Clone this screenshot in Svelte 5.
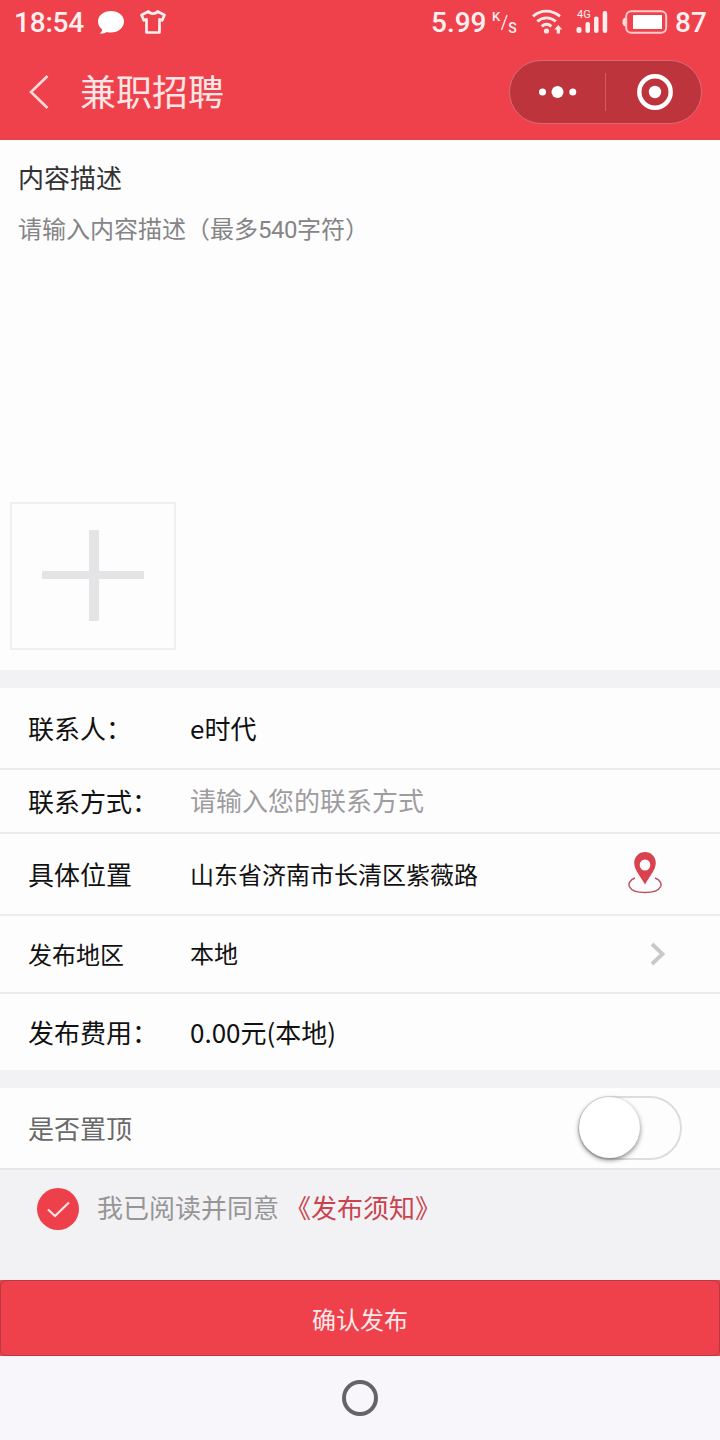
<script>
  let contact = $state('e时代');
  let pinned = $state(false);
</script>

<div class="phone">
  <header>
    <div class="status">
      <span class="time">18:54</span>
      <svg class="bubble" width="28" height="26" viewBox="0 0 28 26">
        <path d="M14 1C6.8 1 1 5.600 1 11.500c0 3.300 1.600 6 4.200 8-.2 1.800-1.200 3-2.700 4 2.900.3 5.400-.4 7.300-1.500 1.300.4 2.700.5 4.200.5 7.200 0 13-4.900 13-11S21.200 1 14 1z" fill="#fff" />
      </svg>
      <svg class="shirt" width="28" height="26" viewBox="0 0 28 26">
        <path d="M9.500 2.500 2.500 6l2.300 5.300 2.700-1V23.500h13V10.300l2.700 1L25.500 6l-7-3.500c-1.600 2.800-7.400 2.800-9 0z" fill="none" stroke="#fff0f0" stroke-width="2.700" stroke-linejoin="round" />
      </svg>
      <span class="rate">5.99</span>
      <span class="unit"><i>K</i><svg width="10" height="20" viewBox="0 0 10 20"><path d="M8 2 2.500 17" stroke="#ffdede" stroke-width="1.500" /></svg><i class="sec">S</i></span>
      <svg class="wifi" width="32" height="28" viewBox="0 0 32 28">
        <g fill="none" stroke="#ffeaea" stroke-width="2.900">
          <path d="M2 8.300c8-6.900 18.500-6.900 27 0" />
          <path d="M6.300 13.400c5.600-4.700 12.800-4.700 18.500 0" />
          <path d="M10.700 18.300c3-2.500 6.700-2.500 9.700 0" />
        </g>
        <circle cx="15.500" cy="23" r="2.600" fill="#ffeaea" />
        <path d="m27.300 17 4 4.400h-2.400v4.200h-3.200v-4.200h-2.400z" fill="#ffeaea" />
      </svg>
      <span class="signal">
        <b>4G</b>
        <svg width="32" height="26" viewBox="0 0 32 26" fill="#ffeeee">
          <rect x="0.500" y="18" width="5" height="6" rx="2" />
          <rect x="9.500" y="13" width="4.500" height="11" rx="2" />
          <rect x="18" y="7.500" width="4.500" height="16.500" rx="2" />
          <rect x="26.700" y="2" width="4.500" height="22" rx="2" />
        </svg>
      </span>
      <svg class="battery" width="46" height="24" viewBox="0 0 46 24">
        <rect x="4.200" y="1.200" width="40" height="21.600" rx="5" fill="none" stroke="#ffcaca" stroke-width="2" />
        <path d="M3.500 7.500v9C1.200 16 .5 14.500.5 12s.7-4 3-4.500z" fill="#ffe3e3" />
        <rect x="11" y="5" width="29" height="14" fill="#fff" />
      </svg>
      <span class="percent">87</span>
    </div>
    <div class="title">
      <svg class="back" width="20" height="36" viewBox="0 0 20 36">
        <path d="M18.500 2 2 18l16.500 16" fill="none" stroke="#ffdada" stroke-width="2.600" />
      </svg>
      <h1>兼职招聘</h1>
      <div class="capsule">
        <div class="half">
          <svg width="40" height="14" viewBox="0 0 40 14" fill="#fff">
            <circle cx="4.500" cy="7" r="3.500" /><circle cx="19.500" cy="7" r="6" /><circle cx="34.800" cy="7" r="3.500" />
          </svg>
        </div>
        <div class="half right">
          <svg width="36" height="36" viewBox="0 0 36 36">
            <circle cx="18" cy="18" r="15.700" fill="none" stroke="#fff" stroke-width="4.400" />
            <circle cx="18" cy="18" r="6.200" fill="#fff" />
          </svg>
        </div>
      </div>
    </div>
  </header>

  <section class="describe">
    <h2>内容描述</h2>
    <p>请输入内容描述（最多<span class="num">540</span>字符）</p>
    <div class="upload">
      <svg width="104" height="92" viewBox="0 0 104 92" fill="#e4e3e5">
        <rect x="48" y="0" width="10" height="91" /><rect x="1" y="41" width="102" height="8" />
      </svg>
    </div>
  </section>

  <section class="form">
    <div class="row contact"><span class="label">联系人：</span><span>{contact}</span></div>
    <div class="row way"><span class="label">联系方式：</span><span class="hint">请输入您的联系方式</span></div>
    <div class="row place">
      <span class="label">具体位置</span><span class="small">山东省济南市长清区紫薇路</span>
      <svg class="pin" width="34" height="44" viewBox="0 0 34 44">
        <path d="M7 27C-3 31-1 41.500 17 41.500S37 31 27 27" fill="none" stroke="#bd5360" stroke-width="1.500" />
        <path fill-rule="evenodd" d="M17 1C11 1 6.200 5.800 6.200 12c0 7.600 8 15.500 10.800 21.500C19.800 27.500 27.800 19.600 27.800 12 27.800 5.800 23 1 17 1zm0 7.500a5.300 5.500 0 1 1 0 11 5.300 5.500 0 0 1 0-11z" fill="#d9434f" />
      </svg>
    </div>
    <div class="row area">
      <span class="label small">发布地区</span><span class="small">本地</span>
      <svg class="arrow" width="16" height="24" viewBox="0 0 16 24">
        <path d="m2 2 10.500 10L2 22" fill="none" stroke="#c8c7c9" stroke-width="3.800" />
      </svg>
    </div>
    <div class="row fee"><span class="label">发布费用：</span><span>0.00元(本地)</span></div>
  </section>

  <section class="top">
    <span>是否置顶</span>
    <button class="switch" class:on={pinned} aria-label="是否置顶" onclick={() => (pinned = !pinned)}><i></i></button>
  </section>

  <section class="agree">
    <svg width="42" height="42" viewBox="0 0 42 42">
      <circle cx="21" cy="21" r="21" fill="#ee404b" />
      <path d="m11 21.500 7 6.500 14-13.500" fill="none" stroke="#ffe4e4" stroke-width="2.200" />
    </svg>
    <span>我已阅读并同意</span>
    <a href="#notice">《发布须知》</a>
  </section>

  <div class="bar"><button class="submit">确认发布</button></div>
  <nav><i></i></nav>
</div>

<style>
  :global(body) { margin: 0; }
  .phone {
    width: 720px; height: 1440px; display: flex; flex-direction: column; overflow: hidden;
    background: #f2f1f3; color: #111;
    font: 26px/36px "Noto Sans CJK SC", sans-serif;
  }
  .phone * { box-sizing: border-box; }
  svg { display: block; flex: none; }
  i { font-style: normal; }
  header { height: 140px; background: #ef414b; color: #fff; }
  .status {
    height: 44px; display: flex; align-items: center; padding-left: 14px;
    font-family: Roboto, sans-serif; font-size: 28px; font-weight: 500; white-space: nowrap;
  }
  .status > span { color: #fff0f0; }
  .time { width: 83px; padding-top: 2px; letter-spacing: -0.2px; }
  .bubble { margin-top: 1px; }
  .shirt { margin-left: 14px; }
  .rate { margin-left: 264px; width: 61px; padding-top: 2px; }
  .unit { display: flex; width: 24px; height: 24px; font-size: 13px; line-height: 14px; }
  .unit svg { margin: 3px -1px 0; }
  .unit .sec { margin-top: 11px; font-size: 14px; }
  .wifi { margin-left: 15px; }
  .signal { display: grid; width: 32px; height: 26px; margin-left: 13px; }
  .signal b, .signal svg { grid-area: 1 / 1; }
  .signal b { font-size: 11px; line-height: 11px; font-weight: 400; padding-left: 1px; }
  .battery { margin-left: 14px; }
  .percent { margin-left: 7px; padding-top: 2px; }
  .title { height: 96px; display: flex; align-items: center; padding: 0 18px 0 29px; }
  h1 { margin: -5px 0 0 31px; font-size: 36px; line-height: 48px; font-weight: 400; color: #ffe6e6; }
  .capsule {
    margin-left: auto; width: 193px; height: 64px; display: flex; align-items: center;
    border: 1px solid #da6a72; border-radius: 32px; background: #bd343d;
  }
  .half { width: 96px; height: 38px; display: flex; align-items: center; justify-content: center; }
  .right { border-left: 1px solid #d35a62; padding-left: 2px; }
  .describe { height: 530px; background: #fefdfe; padding: 19px 10px 0; }
  h2 { margin: 0; padding-left: 8px; font-size: 26px; line-height: 36px; font-weight: 400; color: #333; }
  p { margin: 15px 0 0; padding-left: 8px; font-size: 24px; line-height: 36px; color: #858486; }
  .num { font-family: Roboto, sans-serif; letter-spacing: -0.5px; }
  .upload {
    width: 166px; height: 148px; margin-top: 254px; border: 2px solid #efeef0;
    display: flex; align-items: center; justify-content: center;
  }
  .form { margin-top: 18px; background: #fefdfe; }
  .row {
    display: flex; align-items: center; padding: 0 54px 0 28px;
    border-bottom: 2px solid #ecebed; color: #111;
  }
  .label { width: 162px; flex: none; white-space: nowrap; }
  .small { font-size: 24px; }
  .hint { color: #9d9c9e; margin-top: -3px; }
  .contact { height: 82px; padding-bottom: 1px; }
  .way { height: 64px; }
  .place { height: 82px; }
  .pin { margin: -2px 4px 0 auto; }
  .area { height: 78px; }
  .area .label + span { margin-top: -3px; }
  .arrow { margin: 0 0 0 auto; }
  .fee { height: 76px; border: 0; padding-bottom: 1px; }
  .top {
    height: 82px; margin-top: 18px; padding: 0 38px 0 28px; display: flex; align-items: center;
    justify-content: space-between; background: #fefdfe; border-bottom: 2px solid #e6e5e7; color: #69686a;
  }
  .switch {
    width: 104px; height: 64px; padding: 0; border: 2px solid #dddcde; border-radius: 32px;
    background: #fefdfe; display: flex;
  }
  .switch i {
    width: 61px; height: 61px; margin: -1px 0 0 -1px; border-radius: 50%; background: #fff;
    box-shadow: 0 2px 5px rgba(0, 0, 0, .48);
  }
  .switch.on { justify-content: flex-end; background: #ee404b; }
  .agree { height: 110px; display: flex; align-items: flex-start; padding: 18px 37px; color: #969597; }
  .agree span { margin: 1px 0 0 18px; }
  .agree a { margin: 1px 0 0 6px; color: #c9434f; text-decoration: none; }
  .bar { height: 76px; background: #e2464f; }
  .submit {
    display: block; width: 720px; height: 76px; padding: 1px 0 0; border: 1px solid #ba3a43; border-radius: 6px;
    background: #ee414b; color: #ffe9e9; font: 24px/36px "Noto Sans CJK SC", sans-serif;
  }
  nav { height: 84px; display: flex; align-items: center; justify-content: center; background: #f8f6fa; }
  nav i { width: 36px; height: 36px; border: 4px solid #656367; border-radius: 50%; }
</style>
